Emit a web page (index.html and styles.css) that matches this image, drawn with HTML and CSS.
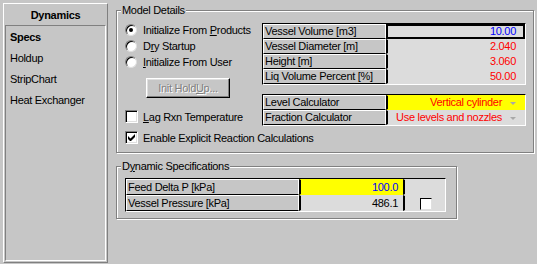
FILE: index.html
```html
<!DOCTYPE html>
<html lang="en">
<head>
    <meta charset="UTF-8">
    <title>Dynamics</title>
    <link rel="stylesheet" href="styles.css">
</head>
<body>
<div class="app">
    <div class="sidebar">
        <div class="side-title">Dynamics</div>
        <ul class="side-list">
            <li class="active">Specs</li>
            <li>Holdup</li>
            <li>StripChart</li>
            <li>Heat Exchanger</li>
        </ul>
    </div>

    <div class="main">
        <div class="group model">
            <span class="group-title">Model Details</span>
            <div class="model-top">
                <div class="options">
                    <div class="radio-row"><span class="radio checked"></span><span>Initialize From <u>P</u>roducts</span></div>
                    <div class="radio-row"><span class="radio"></span><span>D<u>r</u>y Startup</span></div>
                    <div class="radio-row"><span class="radio"></span><span><u>I</u>nitialize From User</span></div>
                    <div class="btn disabled"><span>Init Hold<u>U</u>p...</span></div>
                    <div class="check-row lag"><span class="check"></span><span><u>L</u>ag Rxn Temperature</span></div>
                </div>
                <div class="tables">
                    <table class="grid vessel">
                        <tr><td class="lbl">Vessel Volume [m3]</td><td class="val blue focus">10.00</td></tr>
                        <tr><td class="lbl">Vessel Diameter [m]</td><td class="val red">2.040</td></tr>
                        <tr><td class="lbl">Height [m]</td><td class="val red">3.060</td></tr>
                        <tr><td class="lbl">Liq Volume Percent [%]</td><td class="val red">50.00</td></tr>
                    </table>
                    <table class="grid vessel calc">
                        <tr><td class="lbl">Level Calculator</td><td class="val red yellow">Vertical cylinder<span class="arrow"></span></td></tr>
                        <tr><td class="lbl">Fraction Calculator</td><td class="val red">Use levels and nozzles<span class="arrow"></span></td></tr>
                    </table>
                </div>
            </div>
            <div class="check-row enable">
                <span class="check checked">
                    <svg width="7" height="7" viewBox="0 0 7 7"><path d="M0 2v3l2 2h1l4-4V0L2.5 4.5z" fill="#000"/></svg>
                </span><span>Enable Explicit Reaction Calculations</span>
            </div>
        </div>

        <div class="group dyn">
            <span class="group-title">D<u>y</u>namic Specifications</span>
            <table class="grid spec">
                <tr><td class="lbl">Feed Delta P [kPa]</td><td class="val blue yellow">100.0</td><td class="opt yellow"></td></tr>
                <tr><td class="lbl">Vessel Pressure [kPa]</td><td class="val">486.1</td><td class="opt"><span class="cell-check"></span></td></tr>
            </table>
        </div>
    </div>
</div>
</body>
</html>
```

FILE: styles.css
```css
body {
    margin: 0;
    background: #c6c6c6;
    font-family: "Liberation Sans", Arial, sans-serif;
    font-size: 11px;
    letter-spacing: -0.3px;
    color: #000;
}

.app {
    display: flex;
    align-items: flex-start;
    padding: 3px 0 0 3px;
}

/* left page list */
.sidebar {
    box-sizing: border-box;
    width: 105px;
    height: 260px;
    display: flex;
    flex-direction: column;
    padding: 0 1px 1px 1px;
    border: 1px solid;
    border-color: #fff #808080 #808080 #fff;
}

.side-title {
    height: 21px;
    line-height: 23px;
    font-weight: bold;
    text-align: center;
}

.side-list {
    flex: 1;
    margin: 0;
    padding: 1px 0 0 4px;
    list-style: none;
    border: 1px solid;
    border-color: #808080 #fff #fff #808080;
}

.side-list li {
    line-height: 21px;
}

.side-list li.active {
    font-weight: bold;
}

/* group boxes */
.main {
    margin-left: 8px;
    padding-top: 7px;
}

.group {
    position: relative;
    box-sizing: border-box;
    border: 1px solid #808080;
    box-shadow: 1px 1px 0 #fff, inset 1px 1px 0 #fff;
}

.group-title {
    position: absolute;
    top: -7px;
    left: 4px;
    padding: 0 1px;
    line-height: 13px;
    background: #c6c6c6;
}

.model {
    width: 418px;
    height: 143px;
    padding: 11px 0 0 8px;
}

.model-top {
    display: flex;
}

.options {
    width: 137px;
}

.radio-row,
.check-row {
    display: flex;
    align-items: center;
    white-space: nowrap;
}

.radio-row {
    height: 16px;
}

.check-row {
    height: 15px;
}

.lag {
    margin-top: 11px;
}

.enable {
    margin-top: 4px;
}

.radio {
    position: relative;
    box-sizing: border-box;
    width: 12px;
    height: 12px;
    margin-right: 6px;
    border-radius: 50%;
    background: #fff;
    border: 1px solid;
    border-color: #808080 #dfdfdf #dfdfdf #808080;
    box-shadow: inset 1px 1px 0 #000;
}

.radio.checked::after {
    content: "";
    position: absolute;
    left: 3px;
    top: 3px;
    width: 4px;
    height: 4px;
    border-radius: 50%;
    background: #000;
}

.check {
    box-sizing: border-box;
    width: 13px;
    height: 13px;
    margin-right: 5px;
    display: flex;
    align-items: center;
    justify-content: center;
    background: #fff;
    border: 1px solid;
    border-color: #808080 #fff #fff #808080;
    box-shadow: inset 1px 1px 0 #000, inset -1px -1px 0 #dfdfdf;
}

.btn {
    box-sizing: border-box;
    width: 84px;
    height: 20px;
    margin: 8px 0 0 21px;
    display: flex;
    align-items: center;
    justify-content: center;
    border: 1px solid;
    border-color: #fff #000 #000 #fff;
    box-shadow: inset -1px -1px 0 #808080, inset 1px 1px 0 #dfdfdf;
}

.btn.disabled {
    color: #808080;
    text-shadow: 1px 1px 0 #fff;
}

/* property grids */
.tables {
    margin-top: 1px;
}

.grid {
    table-layout: fixed;
    border-collapse: separate;
    border-spacing: 0;
    border: 1px solid;
    border-color: #000 #fff #fff #000;
}

.grid td {
    box-sizing: border-box;
    padding: 0;
    line-height: 13px;
    white-space: nowrap;
    overflow: hidden;
}

.grid .lbl {
    padding-left: 1px;
    background: #c6c6c6;
    border: 1px solid;
    border-color: #fff #fff #000 #fff;
}

.grid .val {
    padding-right: 8px;
    text-align: right;
    background: #dcdcdc;
    border: 1px solid transparent;
    border-left: 2px solid #000;
}

.vessel {
    width: 264px;
}

.vessel .lbl {
    width: 123px;
}

.vessel .val {
    width: 139px;
}

.calc {
    margin-top: 9px;
}

.focus {
    outline: 2px solid #000;
    outline-offset: -2px;
}

.blue {
    color: #0000ff;
}

.red {
    color: #ff0000;
}

.grid .yellow {
    background: #ffff00;
}

.arrow {
    display: inline-block;
    margin-left: 8px;
    vertical-align: middle;
    border-top: 3px solid #a8a8a8;
    border-left: 3px solid transparent;
    border-right: 3px solid transparent;
}

.dyn {
    width: 341px;
    height: 53px;
    margin-top: 13px;
    padding: 11px 0 0 8px;
}

.spec {
    width: 321px;
}

.spec td {
    line-height: 14px;
}

.spec .lbl {
    width: 173px;
}

.spec .val {
    width: 104px;
    padding-right: 4px;
}

.spec .opt {
    width: 42px;
    text-align: center;
    background: #dcdcdc;
    border: 1px solid transparent;
    border-left: 2px solid #000;
}

.cell-check {
    display: inline-block;
    box-sizing: border-box;
    width: 12px;
    height: 12px;
    margin-left: 2px;
    vertical-align: middle;
    background: #fff;
    border: 1px solid;
    border-color: #000 #dfdfdf #dfdfdf #000;
}
```
